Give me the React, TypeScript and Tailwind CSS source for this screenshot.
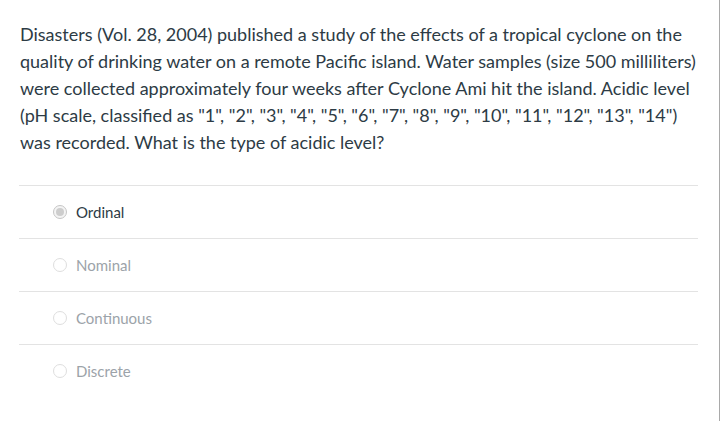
import React from "react";

const options = [
  { label: "Ordinal", selected: true },
  { label: "Nominal", selected: false },
  { label: "Continuous", selected: false },
  { label: "Discrete", selected: false },
];

export default function App() {
  return (
    <div
      className="w-[720px] h-[421px] bg-white border-r border-[#a9a9a9] overflow-hidden"
      style={{ fontFamily: "Lato, 'Noto Sans', sans-serif" }}
    >
      <div className="pl-[19px] pt-[21px] w-[698px]">
        <p className="text-[18px] leading-[27px] text-[#2d3b45] pl-px">
          Disasters (Vol. 28, 2004) published a study of the effects of a tropical cyclone on the quality of drinking water on a remote Pacific island. Water samples (size 500 milliliters) were collected approximately four weeks after Cyclone Ami hit the island. Acidic level (pH scale, classified as "1", "2", "3", "4", "5", "6", "7", "8", "9", "10", "11", "12", "13", "14") was recorded. What is the type of acidic level?
        </p>
        <div className="mt-[29px] flex flex-col">
          {options.map((o) => (
            <div
              key={o.label}
              className="h-[53px] border-t border-[#e3e3e3] flex items-center pl-[34px]"
            >
              <span
                className={
                  "w-[14px] h-[14px] rounded-full border flex items-center justify-center shrink-0 " +
                  (o.selected ? "border-[#c6c6c6] bg-[#f4f4f4]" : "border-[#dedede] bg-white")
                }
              >
                {o.selected && <span className="w-[8px] h-[8px] rounded-full bg-[#cdcdcd]" />}
              </span>
              <span
                className={
                  "ml-[9px] text-[15px] " + (o.selected ? "text-[#2d3b45]" : "text-[#9ca3a9]")
                }
              >
                {o.label}
              </span>
            </div>
          ))}
        </div>
      </div>
    </div>
  );
}
